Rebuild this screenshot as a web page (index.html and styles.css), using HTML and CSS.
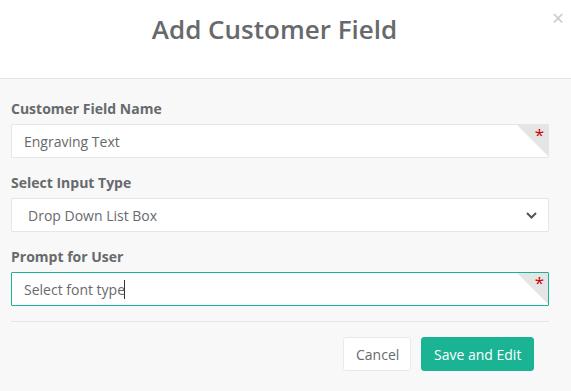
FILE: index.html
```html
<!DOCTYPE html>
<html lang="en">
<head>
    <meta charset="UTF-8">
    <title>Add Customer Field</title>
    <link rel="stylesheet" href="styles.css">
</head>
<body>
    <div class="modal">
        <!-- Header -->
        <div class="modal-header">
            <h4 class="modal-title">Add Customer Field</h4>
            <button class="close-btn">&times;</button>
        </div>

        <!-- Form -->
        <div class="modal-body">
            <div class="form-group">
                <label class="field-label">Customer Field Name</label>
                <div class="input-wrap required">
                    <input class="field-input" type="text" value="Engraving Text">
                    <span class="corner"></span>
                    <span class="star">*</span>
                </div>
            </div>
            <div class="form-group">
                <label class="field-label">Select Input Type</label>
                <div class="select-wrap">
                    <select class="field-input field-select">
                        <option>Drop Down List Box</option>
                    </select>
                    <svg class="chevron" width="11" height="7" viewBox="0 0 11 7"><path d="M1 1l4.5 4.5L10 1" fill="none" stroke="#555" stroke-width="2"/></svg>
                </div>
            </div>
            <div class="form-group">
                <label class="field-label">Prompt for User</label>
                <div class="input-wrap required">
                    <input class="field-input focused" type="text" value="Select font type">
                    <span class="caret"></span>
                    <span class="corner"></span>
                    <span class="star">*</span>
                </div>
            </div>
        </div>

        <!-- Footer -->
        <div class="modal-footer">
            <button class="btn btn-white">Cancel</button>
            <button class="btn btn-primary">Save and Edit</button>
        </div>
    </div>
</body>
</html>
```

FILE: styles.css
```css
body {
    margin: 0;
    font-family: "Open Sans", Arial, sans-serif;
    color: #676a6c;
    background-color: #f8f8f9;
    overflow: hidden;
}
.modal-header {
    position: relative;
    height: 78px;
    background-color: #fff;
    border-bottom: 1px solid #e5e5e5;
    display: flex;
    justify-content: center;
    align-items: center;
}
.modal-title {
    margin: 0 0 20px 0;
    font-size: 26px;
    font-weight: 600;
    color: #676a6c;
    padding-right: 22px;
}
.close-btn {
    position: absolute;
    top: 8px;
    right: 7px;
    border: none;
    background: transparent;
    font-size: 21px;
    line-height: 21px;
    color: #c8c8c8;
    padding: 0;
    font-family: "Open Sans", Arial, sans-serif;
}
.modal-body {
    padding: 20px 22px 0 11px;
}
.form-group {
    margin-bottom: 15px;
}
.field-label {
    display: block;
    font-size: 14px;
    font-weight: 700;
    line-height: 20px;
    margin-bottom: 5px;
    color: #676a6c;
}
.input-wrap, .select-wrap {
    position: relative;
}
.field-input {
    display: block;
    box-sizing: border-box;
    width: 100%;
    height: 34px;
    padding: 6px 12px;
    font-family: "Open Sans", Arial, sans-serif;
    font-size: 14px;
    color: #676a6c;
    background-color: #fff;
    border: 1px solid #e5e6e7;
    border-radius: 1px;
    outline: none;
}
.field-input.focused {
    border-color: #1ab394;
}
.field-select {
    appearance: none;
    padding-left: 16px;
}
.chevron {
    position: absolute;
    right: 12px;
    top: 14px;
}
.corner {
    position: absolute;
    top: 1px;
    right: 1px;
    width: 0;
    height: 0;
    border-top: 31px solid #e5e5e5;
    border-left: 31px solid transparent;
}
.star {
    position: absolute;
    top: 2px;
    right: 5px;
    font-size: 17px;
    line-height: 17px;
    color: #c00;
}
.caret {
    position: absolute;
    left: 113px;
    top: 8px;
    width: 1px;
    height: 19px;
    background-color: #333;
}
.modal-footer {
    margin: 1px 22px 0 11px;
    padding-top: 15px;
    border-top: 1px solid #e5e5e5;
    display: flex;
    justify-content: flex-end;
    gap: 10px;
    padding-right: 15px;
}
.btn {
    height: 34px;
    padding: 0 12px;
    font-family: "Open Sans", Arial, sans-serif;
    font-size: 14px;
    border-radius: 3px;
    white-space: nowrap;
    cursor: pointer;
}
.btn-white {
    background-color: #fff;
    color: #676a6c;
    border: 1px solid #e7eaec;
    width: 68px;
}
.btn-primary {
    background-color: #1ab394;
    border: 1px solid #1ab394;
    color: #fff;
    width: 113px;
}
```
